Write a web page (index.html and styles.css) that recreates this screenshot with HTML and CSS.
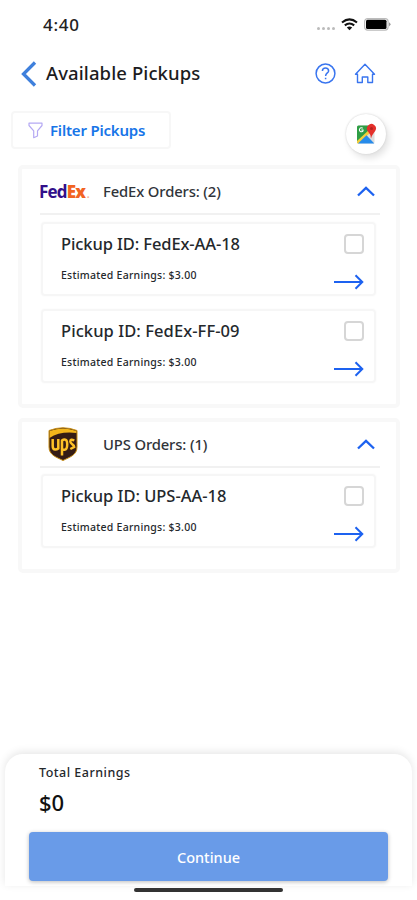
FILE: index.html
```html
<!DOCTYPE html>
<html lang="en">
<head>
<meta charset="utf-8">
<title>Available Pickups</title>
<link rel="stylesheet" href="styles.css">
</head>
<body>
<div class="screen">
  <div class="status">
    <span class="time">4:40</span>
    <div class="indicators">
      <span class="dots"><i></i><i></i><i></i><i></i></span>
      <svg class="wifi" width="17" height="13" viewBox="0 0 17 13" fill="none" stroke="#111" stroke-width="2.1"><path d="M1 4.5Q8.500-1.700 16 4.500M3.800 7.400Q8.500 3.600 13.200 7.400"/><path d="M5.800 9.500Q8.500 7.500 11.200 9.500L8.500 12.300Z" fill="#111" stroke="none"/></svg>
      <svg class="battery" width="27" height="13" viewBox="0 0 27 13"><rect x=".6" y=".6" width="23.500" height="11.500" rx="3" fill="#fff" stroke="#bbb" stroke-width="1.200"/><rect x="2" y="1.800" width="20.500" height="9.200" rx="1.500" fill="#000"/><path d="M25 4.300Q28 6.300 25 8.500Z" fill="#999"/></svg>
    </div>
  </div>

  <header class="header">
    <svg class="back" width="16" height="26" viewBox="0 0 16 26" fill="none" stroke="#3f80dc" stroke-width="3.300"><path d="M14 1.500L2.500 13L14 24.500"/></svg>
    <h1>Available Pickups</h1>
    <svg class="help" width="21" height="21" viewBox="0 0 21 21" fill="none" stroke="#3975ef" stroke-width="1.500"><circle cx="10.500" cy="10.500" r="9.400"/><path d="M7.400 8Q7.500 5 10.500 5T13.600 7.900C13.600 10 10.600 10 10.600 13M10.600 14.700V16.200"/></svg>
    <svg class="home" width="22" height="21" viewBox="0 0 22 21" fill="none" stroke="#3975ef" stroke-width="1.400" stroke-linejoin="round"><path d="M1.500 11.200L11 1.200L20.500 11.200H18.500V19.500H13.800V14H8.300V19.500H3.500V11.200Z"/></svg>
  </header>

  <div class="tools">
    <button class="filter">
      <svg width="15" height="17" viewBox="0 0 15 17" fill="none" stroke="#b5a9f3" stroke-width="1.200" stroke-linejoin="round"><path d="M1 1.200H14V3.500L9.500 8.800V14L5.700 15.700V8.800L1 3.500Z"/></svg>
      <span>Filter Pickups</span>
    </button>
    <button class="map" aria-label="Map">
      <svg width="21" height="22" viewBox="0 0 21 22"><rect x="1" y="2.500" width="17.500" height="18" rx="1.500" fill="#ddd"/><path d="M2.500 2.500H13L14 8L1 20V4Q1 2.500 2.500 2.500Z" fill="#2f9e45"/><path d="M1 18L14 6L16 8L3 20.500H2Q1 20.500 1 19Z" fill="#f4ce3c"/><path d="M2 20.500L10.500 12.300L18.300 20.500Z" fill="#278bea"/><path d="M6.700 5.200A2 2 0 1 0 7 8V7H5.300" fill="none" stroke="#fff" stroke-width="1.100"/><path d="M15 15.500Q14.600 11 12 8.500A4.500 4.500 0 1 1 19.200 8C17.500 10.500 15.800 12 15 15.500Z" fill="#e4302b"/><circle cx="15.500" cy="5.500" r="1.500" fill="#b5241f"/></svg>
    </button>
  </div>

  <main>
    <section class="card fedex-card">
      <div class="card-head">
        <div class="logo fedex"><span>Fed</span><b>Ex</b><i>.</i></div>
        <h2>FedEx Orders: (2)</h2>
        <svg class="chevron" width="18" height="11" viewBox="0 0 18 11" fill="none" stroke="#1d62f0" stroke-width="2.300"><path d="M1 9.500L9 1.800L17 9.500"/></svg>
      </div>
      <article class="item">
        <div class="info"><h3>Pickup ID: FedEx-AA-18</h3><p>Estimated Earnings: $3.00</p></div>
        <div class="side"><span class="check"></span><svg width="30" height="16" viewBox="0 0 30 16" fill="none" stroke="#1d62f0" stroke-width="2"><path d="M0 8H28M21.500 1.200L28.300 8L21.500 14.800"/></svg></div>
      </article>
      <article class="item">
        <div class="info"><h3 class="id-ff">Pickup ID: FedEx-FF-09</h3><p>Estimated Earnings: $3.00</p></div>
        <div class="side"><span class="check"></span><svg width="30" height="16" viewBox="0 0 30 16" fill="none" stroke="#1d62f0" stroke-width="2"><path d="M0 8H28M21.500 1.200L28.300 8L21.500 14.800"/></svg></div>
      </article>
    </section>

    <section class="card ups-card">
      <div class="card-head">
        <div class="logo"><svg class="ups" width="30" height="34" viewBox="0 0 30 34"><path d="M1 3.500Q15-2 29 3.500V20C29 28 22 30 15 33.500C8 30 1 28 1 20Z" fill="#351c15"/><path d="M1.500 11V4Q15-1 28.500 4V6Q12 4 1.500 11Z" fill="#f3b51b"/><path d="M1 3.500Q15-2 29 3.500V20C29 28 22 30 15 33.500C8 30 1 28 1 20Z" fill="none" stroke="#c98f16" stroke-width="1"/><path d="M4.700 12V19Q4.700 22.500 7.200 22.500Q9 22.500 10.300 21.500V12M14 28.500V13.500Q15.200 12.500 16.700 12.500Q19.200 12.500 19.200 17.500T16.500 22.700Q15.200 22.700 14 22M26.300 13.500Q22.300 11.500 22.300 14.500C22.300 17 26.200 17.500 26.200 20T22.300 22" fill="none" stroke="#ffc127" stroke-width="2.500"/></svg></div>
        <h2>UPS Orders: (1)</h2>
        <svg class="chevron" width="18" height="11" viewBox="0 0 18 11" fill="none" stroke="#1d62f0" stroke-width="2.300"><path d="M1 9.500L9 1.800L17 9.500"/></svg>
      </div>
      <article class="item">
        <div class="info"><h3 class="id-ups">Pickup ID: UPS-AA-18</h3><p>Estimated Earnings: $3.00</p></div>
        <div class="side"><span class="check"></span><svg width="30" height="16" viewBox="0 0 30 16" fill="none" stroke="#1d62f0" stroke-width="2"><path d="M0 8H28M21.500 1.200L28.300 8L21.500 14.800"/></svg></div>
      </article>
    </section>
  </main>

  <footer class="sheet">
    <div class="label">Total Earnings</div>
    <div class="total">$0</div>
    <button class="continue">Continue</button>
  </footer>
  <div class="home-bar"></div>
</div>
</body>
</html>
```
FILE: styles.css
```css
* { box-sizing: border-box; }
body { margin: 0; background: #fff; font-family: "Noto Sans", "Open Sans", sans-serif; color: #24282c; }
h1, h2, h3, p { margin: 0; font-weight: 500; white-space: nowrap; }
button { font: inherit; padding: 0; border: 0; background: #fff; }
svg { display: block; flex: none; }
.screen { width: 417px; height: 900px; display: flex; flex-direction: column; overflow: hidden; }

.status { height: 48px; padding: 0 26px 0 43px; display: flex; align-items: center; justify-content: space-between; }
.time { font-size: 17px; font-weight: 500; color: #222; letter-spacing: .7px; }
.indicators { display: flex; align-items: center; }
.dots { display: flex; gap: 2px; margin: 8px 6px 0 0; }
.dots i { width: 3px; height: 3px; border-radius: 50%; background: #bbb; }
.battery { margin-left: 6px; }

.header { height: 51px; padding: 0 41px 0 21px; display: flex; align-items: center; }
h1 { flex: 1; margin: -2px 0 0 9px; font-size: 18.5px; color: #1c1c1e; letter-spacing: .1px; }
.help { margin-right: 18px; }

.tools { height: 66px; padding: 12px 31px 0 11px; display: flex; justify-content: space-between; }
.filter { width: 160px; height: 38px; border: 2px solid #f7f7f7; border-radius: 4px; display: flex; align-items: center; gap: 7px; padding-left: 15px; color: #1775e8; font-size: 15px; font-weight: 600; letter-spacing: -.2px; white-space: nowrap; }
.map { width: 40px; height: 40px; margin-top: 3px; border-radius: 50%; display: flex; align-items: center; justify-content: center; box-shadow: 0 0 2px #ccc, 3px 4px 7px #e2e2e2; }

.card { margin: 0 17px 0 18px; border: 4px solid #f8f8f8; border-radius: 5px; padding: 0 16px 0 18px; }
.fedex-card { height: 243px; margin-bottom: 10px; }
.ups-card { height: 155px; }
.card-head { height: 46px; border-bottom: 2px solid #f1f1f1; display: flex; align-items: center; margin-bottom: 7px; }
.ups-card .card-head { margin-bottom: 6px; }
.logo { width: 63px; flex: none; }
.fedex { display: flex; align-items: baseline; font: bold 17px/20px "Open Sans", sans-serif; letter-spacing: -.8px; color: #32108a; margin-left: -1px; padding-top: 3px; width: 64px; }
.fedex b { color: #f26322; }
.fedex i { color: #f9b090; font-size: 10px; margin-left: 2px; }
.ups { margin-left: 8px; }
h2 { flex: 1; font-size: 14.8px; color: #30343a; letter-spacing: -.13px; }
.chevron { margin-right: 5px; }

.item { height: 74px; margin: 0 4px 13px 1px; border: 2px solid #f6f6f6; border-radius: 4px; box-shadow: 0 0 2px #f5f5f5; display: flex; justify-content: space-between; padding: 0 10px 0 18px; }
h3 { margin-top: 8px; font-size: 16.5px; line-height: 24px; letter-spacing: -.1px; }
.id-ff { letter-spacing: .08px; }
.id-ups { letter-spacing: -.02px; }
.item p { margin-top: 11px; font-size: 10.5px; line-height: 16px; letter-spacing: .25px; }
.side { padding-top: 10px; display: flex; flex-direction: column; align-items: flex-end; }
.check { width: 20px; height: 20px; border: 2px solid #d6d6d6; border-radius: 4px; margin-bottom: 20px; }

.sheet { margin: auto 5px 0; height: 132px; padding: 8px 19px 0 24px; border-radius: 18px 18px 0 0; box-shadow: 0 -2px 9px #e6e6e6; background: #fff; }
.label { margin-left: 10px; font-size: 12.5px; line-height: 22px; font-weight: 500; letter-spacing: .5px; }
.total { margin-left: 10px; margin-top: 3px; font-size: 22px; line-height: 30px; font-weight: 500; color: #111; }
.continue { display: block; width: 359px; height: 49px; margin-top: 15px; border-radius: 4px; background: #699be8; color: #fff; font-size: 14.5px; font-weight: 500; box-shadow: 0 1px 4px #bbb; }
.home-bar { width: 149px; height: 4px; margin: 2px auto 8px 134px; border-radius: 2px; background: #333; flex: none; }
```
